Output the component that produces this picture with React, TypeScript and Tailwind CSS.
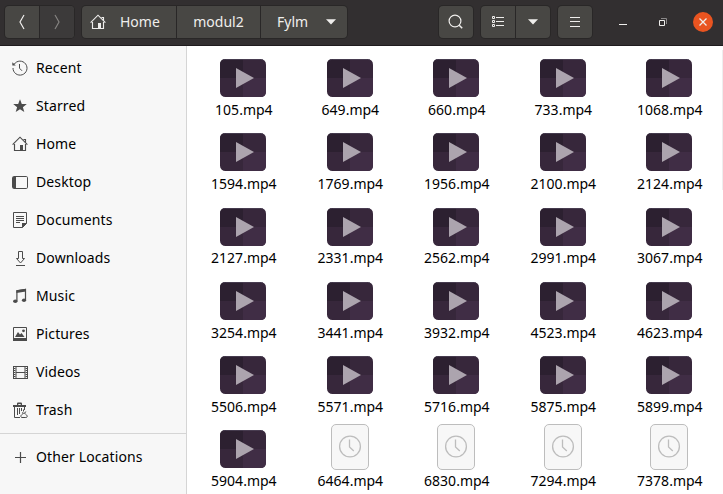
import type { ReactNode } from "react";

const files = [
  "105", "649", "660", "733", "1068",
  "1594", "1769", "1956", "2100", "2124",
  "2127", "2331", "2562", "2991", "3067",
  "3254", "3441", "3932", "4523", "4623",
  "5506", "5571", "5716", "5875", "5899",
  "5904", "6464", "6830", "7294", "7378",
];
const firstPending = 26;

function Icon({ children }: { children: ReactNode }) {
  return (
    <svg width="16" height="16" viewBox="0 0 16 16" fill="none" stroke="currentColor" strokeWidth="1" className="shrink-0">
      {children}
    </svg>
  );
}

function HomeIcon() {
  return (
    <Icon>
      <path d="M.6 8.6 8 1.2l7.4 7.4M2.5 8v6.500h11V8M11.500 3.500h2v3" strokeWidth="1.150" />
      <path d="M8 9h3v5.500H8z" fill="currentColor" stroke="none" />
    </Icon>
  );
}

const places: { label: string; icon: ReactNode }[] = [
  {
    label: "Recent",
    icon: (
      <Icon>
        <path d="M2.2 4.2A7 7 0 1 1 1 8M7.5 4v4.2l2.5 2.6" />
        <path d="M.3 2.2v3.300h3.500z" fill="currentColor" stroke="none" />
      </Icon>
    ),
  },
  {
    label: "Starred",
    icon: (
      <Icon>
        <path d="m8 1.2 1.8 4.7 5 .2-3.9 3.1 1.4 4.9L8 11.3l-4.3 2.8 1.4-4.9L1.2 6.1l5-.2z" fill="currentColor" stroke="none" />
      </Icon>
    ),
  },
  { label: "Home", icon: <HomeIcon /> },
  {
    label: "Desktop",
    icon: (
      <Icon>
        <rect x=".5" y="2.5" width="15" height="12" rx="1.2" />
        <path d="M1 3h3v11H1z" fill="currentColor" stroke="none" />
      </Icon>
    ),
  },
  {
    label: "Documents",
    icon: (
      <Icon>
        <path d="M1.5.5h13v11l-4 4h-9zM4 4.5h8M4 6.5h8M4 8.5h8M4 10.5h4" />
        <path d="M10 11h5l-5 5z" fill="currentColor" stroke="none" />
      </Icon>
    ),
  },
  {
    label: "Downloads",
    icon: (
      <Icon>
        <path d="M6.5 1.5h4v7h2l-4 4.5-4-4.5h2zM4 15.5h9" />
      </Icon>
    ),
  },
  {
    label: "Music",
    icon: (
      <Icon>
        <path d="M4.900 13V2.800l8.600-1.300V12" strokeWidth="1.200" />
        <path d="M4.400 2.200 14 .8v2.700L4.400 5z" fill="currentColor" stroke="none" />
        <ellipse cx="3.300" cy="13.300" rx="2.200" ry="1.800" fill="currentColor" stroke="none" />
        <ellipse cx="12" cy="12.300" rx="2.100" ry="1.800" fill="currentColor" stroke="none" />
      </Icon>
    ),
  },
  {
    label: "Pictures",
    icon: (
      <Icon>
        <path d="M1.500 1.500h13v13h-13z" />
        <path d="M1 12h14v3H1zM3 11l3-5 2 2.500L9.500 7l3 4z" fill="currentColor" stroke="none" />
        <circle cx="11.500" cy="4.800" r="1.400" fill="currentColor" stroke="none" />
      </Icon>
    ),
  },
  {
    label: "Videos",
    icon: (
      <Icon>
        <path d="M1.500 2v13M15.500 2v13" />
        <path d="M2.700 2v13M14.300 2v13" strokeWidth="1.400" strokeDasharray="1 1" />
        <path d="M4 2v13M13 2v13M1 2.500h15M4 8.500h9M1 14.500h15" />
      </Icon>
    ),
  },
  {
    label: "Trash",
    icon: (
      <Icon>
        <path d="M2.500 5v10.500H8M12.500 5v3M5.500 6v7M7.500 6v6M9.500 6v3" />
        <path d="M1 3h4V1.500Q5 .5 6 .5h3q1 0 1 1V3h4v2H1zM6.300 2v1h2.400V2z" fill="currentColor" fillRule="evenodd" stroke="none" />
        <path d="M11.500 7.500v2M9.500 15.500c-1.500-1.800 0-2.500 1-3.500 1-1.200 2.400-1.200 3 .2.600.8 2 1 1.700 2.400q-.2.900-1.400.9zM10 10.500l1.200.8M13.800 9.500l-1 1.500" />
      </Icon>
    ),
  },
];

function Place({ label, icon }: { label: string; icon: ReactNode }) {
  return (
    <li className="flex h-[38px] items-center gap-2 pl-3 text-[#4b4b4b]">
      {icon}
      <span className="tracking-[0.12px] text-black">{label}</span>
    </li>
  );
}

function VideoIcon() {
  return (
    <svg width="46" height="38" viewBox="0 0 46 38">
      <rect width="46" height="38" rx="5.5" fill="#37273b" />
      <path d="M5.5 0H23v19H0V5.5Q0 0 5.5 0z" fill="#2c2030" />
      <path d="M23 19h23v13.500q0 5.500-5.500 5.500H23z" fill="#402d45" />
      <path d="M3 .8Q4 .4 5.500.4h35q1.500 0 2.500.4" fill="none" stroke="#51475a" strokeWidth=".8" />
      <path d="M16 9v20l18-10z" fill="#aca4ae" />
    </svg>
  );
}

function PendingIcon() {
  return (
    <svg width="38" height="46" viewBox="0 0 38 46" fill="none" className="-mt-1">
      <rect x=".5" y=".5" width="37" height="45" rx="4.500" fill="#f7f7f7" stroke="#bdbdbd" />
      <circle cx="19" cy="22.500" r="10.400" stroke="#bdbdbd" strokeWidth="1.300" />
      <path d="M18.500 15.500v7.500l4.300 4" stroke="#bdbdbd" strokeWidth="1.300" />
    </svg>
  );
}

function Caret() {
  return (
    <svg width="10" height="6" viewBox="0 0 10 6" className="shrink-0"><path d="M0 .3h10L5 5.500z" fill="currentColor" /></svg>
  );
}

const buttonGroup = "flex h-8 overflow-hidden rounded bg-[#484744] shadow-[0_0_0_1px_#292727]";

export default function App() {
  return (
    <div className="flex h-[494px] w-[723px] flex-col overflow-hidden bg-white font-['Noto_Sans',sans-serif] text-[14px] leading-5">
      <header className="flex h-[46px] shrink-0 items-start border-b border-[#1f1b1e] bg-[#322f30] pt-1.5 text-[#efeeec]">
        <div className={`${buttonGroup} ml-[5px] w-[69px]`}>
          <button className="grid w-[34px] place-items-center">
            <svg width="8" height="16" viewBox="0 0 8 16" fill="none" stroke="currentColor" strokeWidth="1.200"><path d="M6 1 2 8l4 7" /></svg>
          </button>
          <button className="grid flex-1 place-items-center border-l border-[#292727] bg-[#3c3a3a] text-[#858381]">
            <svg width="8" height="16" viewBox="0 0 8 16" fill="none" stroke="currentColor" strokeWidth="1.200"><path d="M2 1l4 7-4 7" /></svg>
          </button>
        </div>
        <nav className={`${buttonGroup} ml-2 w-[265px]`}>
          <button className="flex w-[94px] items-center gap-[14px] pl-2"><HomeIcon /><span>Home</span></button>
          <button className="w-[84px] border-l border-[#292727]">modul2</button>
          <button className="flex flex-1 items-center gap-[18px] border-l border-[#292727] pl-4"><span>Fylm</span><Caret /></button>
        </nav>
        <div className={`${buttonGroup} ml-[92px] w-[34px]`}>
          <button className="grid flex-1 place-items-center">
            <svg width="16" height="16" viewBox="0 0 16 16" fill="none" stroke="currentColor" strokeWidth="1.200"><circle cx="7" cy="7" r="5.900" /><path d="m11.200 11.200 3 3" strokeWidth="1.500" /></svg>
          </button>
        </div>
        <div className={`${buttonGroup} ml-2 w-[69px]`}>
          <button className="grid w-[34px] place-items-center">
            <svg width="14" height="12" viewBox="0 0 14 12" fill="none" stroke="currentColor"><path d="M1.500.5h2v2h-2zM1.500 4.500h2v2h-2zM1.500 8.500h2v2h-2zM5 1.500h8M5 5.500h8M5 9.500h8" /></svg>
          </button>
          <button className="grid flex-1 place-items-center border-l border-[#292727]"><Caret /></button>
        </div>
        <div className={`${buttonGroup} ml-2 w-[34px]`}>
          <button className="grid flex-1 place-items-center">
            <svg width="10" height="10" viewBox="0 0 10 10" fill="none" stroke="currentColor"><path d="M0 .5h10M0 4.500h10M0 9.500h10" /></svg>
          </button>
        </div>
        <div className="flex h-8 flex-1 items-center">
          <svg width="8" height="10" viewBox="0 0 8 10" className="ml-[27px]"><path d="M0 7.500h8" stroke="currentColor" /></svg>
          <svg width="9" height="10" viewBox="0 0 9 10" fill="none" className="ml-8"><path d="M.5 3.500h5v5h-5z" stroke="currentColor" /><path d="M2 1.500h5.500V7" stroke="#8b8989" /></svg>
          <span className="ml-[25px] grid size-5 place-items-center rounded-full bg-[#e95420]">
            <svg width="8" height="8" viewBox="0 0 8 8"><path d="m.5.5 7 7m0-7-7 7" stroke="currentColor" strokeWidth="1.300" /></svg>
          </span>
        </div>
      </header>
      <div className="flex min-h-0 flex-1">
        <aside className="w-[187px] shrink-0 border-r border-[#d5d5d5] bg-[#f7f7f7] pt-[3px]">
          <ul>{places.map((place) => <Place key={place.label} {...place} />)}</ul>
          <ul className="mt-1 border-t border-[#d5d5d5] pt-1">
            <Place label="Other Locations" icon={<Icon><path d="M3 8.500h11M8.500 3v11" strokeWidth="1.200" /></Icon>} />
          </ul>
        </aside>
        <main className="flex min-w-0 flex-1 overflow-hidden">
          <ul className="ml-[3px] grid w-[532.5px] shrink-0 auto-rows-[74.2px] grid-cols-5 pt-[9.2px] text-black">
            {files.map((file, index) => (
              <li key={file} className="flex flex-col items-center">
                <div className="grid h-[46px] place-items-center">{index >= firstPending ? <PendingIcon /> : <VideoIcon />}</div>
                <span className="-mt-[1.2px] pl-[1.2px]">{file}.mp4</span>
              </li>
            ))}
          </ul>
          <div className="-ml-px mt-1 h-[140px] w-px shrink-0 bg-[#eeeeee]" />
        </main>
      </div>
    </div>
  );
}
